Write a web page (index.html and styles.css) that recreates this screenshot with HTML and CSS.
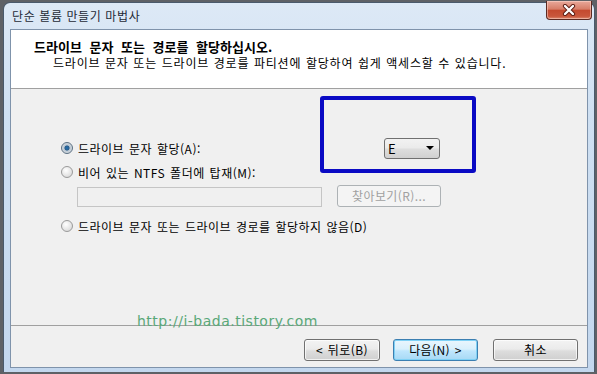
FILE: index.html
```html
<!DOCTYPE html>
<html lang="ko">
<head>
    <meta charset="UTF-8">
    <meta name="viewport" content="width=device-width, initial-scale=1.0">
    <title>단순 볼륨 만들기 마법사</title>
    <link rel="stylesheet" href="styles.css">
</head>
<body>

    <div class="window">
        <!-- Title bar -->
        <div class="titlebar">
            <span class="title">단순 볼륨 만들기 마법사</span>
            <div class="close-btn">
                <svg width="16" height="12" viewBox="0 0 16 12">
                    <path d="M4 2 L12 10 M12 2 L4 10" stroke="#5a1a10" stroke-width="4.2" stroke-linecap="round"/>
                    <path d="M4 2 L12 10 M12 2 L4 10" stroke="#ffffff" stroke-width="2.4" stroke-linecap="round"/>
                </svg>
            </div>
        </div>

        <div class="client">
            <!-- Header -->
            <div class="header">
                <div class="header-title">드라이브 문자 또는 경로를 할당하십시오.</div>
                <div class="header-sub">드라이브 문자 또는 드라이브 경로를 파티션에 할당하여 쉽게 액세스할 수 있습니다.</div>
            </div>

            <!-- Options -->
            <div class="content">
                <div class="option-row">
                    <label class="option option-first">
                        <span class="radio checked"></span>
                        <span>드라이브 문자 할당(A):</span>
                    </label>
                    <div class="combo">
                        <span>E</span>
                        <span class="combo-arrow"></span>
                    </div>
                </div>
                <div class="option-row">
                    <label class="option">
                        <span class="radio"></span>
                        <span>비어 있는 NTFS 폴더에 탑재(M):</span>
                    </label>
                </div>
                <div class="path-row">
                    <div class="path-field"></div>
                    <div class="btn btn-disabled btn-browse">찾아보기(R)...</div>
                </div>
                <div class="option-row option-last">
                    <label class="option">
                        <span class="radio"></span>
                        <span>드라이브 문자 또는 드라이브 경로를 할당하지 않음(D)</span>
                    </label>
                </div>
            </div>

            <!-- Buttons -->
            <div class="footer">
                <div class="btn btn-back">&lt; 뒤로(B)</div>
                <div class="btn btn-default btn-next">다음(N) &gt;</div>
                <div class="btn btn-cancel">취소</div>
            </div>
        </div>
    </div>

    <!-- annotations drawn over the screenshot -->
    <div class="highlight-box"></div>
    <div class="watermark">http://i-bada.tistory.com</div>

</body>
</html>
```

FILE: styles.css
```css
body {
    margin: 0;
    padding: 0;
    height: 374px;
    overflow: hidden;
    background: #5e6166;
    font-family: "Noto Sans CJK KR", "Liberation Sans", sans-serif;
    font-size: 12px;
    color: #000;
}
.window {
    box-sizing: border-box;
    margin: 2px 2px 0 3px;
    height: 370px;
    border: 1px solid #4a5a6c;
    border-bottom: none;
    border-radius: 7px 7px 0 0;
    background: linear-gradient(to bottom, #dde9f6 0%, #cfe0f2 30%, #c3d7ee 100%);
    display: flex;
    flex-direction: column;
}
.titlebar {
    height: 26px;
    display: flex;
    justify-content: space-between;
    align-items: flex-start;
    padding: 0 2px 0 8px;
}
.title {
    margin-top: 5px;
    line-height: 15px;
    letter-spacing: 0.6px;
    color: #1e2a36;
}
.close-btn {
    box-sizing: border-box;
    width: 46px;
    height: 19px;
    margin-top: -2px;
    border: 1px solid #5b2a22;
    border-top: none;
    border-radius: 0 0 4px 4px;
    background: linear-gradient(to bottom, #e9a99b 0%, #d77d68 45%, #c44a2f 52%, #c9573c 85%, #dc8a70 100%);
    box-shadow: inset 0 0 0 1px rgba(255, 220, 210, 0.5);
    display: flex;
    align-items: center;
    justify-content: center;
}
.client {
    flex: 1;
    margin: 0 6px 4px 6px;
    border: 1px solid #7f93ab;
    background: #f0f0f0;
    display: flex;
    flex-direction: column;
}
.header {
    height: 49px;
    background: #fff;
    border-bottom: 1px solid #a0a0a0;
    padding: 9px 0 0 23px;
}
.header-title {
    font-weight: bold;
    font-size: 13px;
    line-height: 15px;
    word-spacing: 4px;
}
.header-sub {
    margin: 1px 0 0 19px;
    line-height: 15px;
    letter-spacing: 0.8px;
    word-spacing: 0.5px;
}
.content {
    flex: 1;
    padding: 48px 0 0 50px;
}
.option-row {
    display: flex;
    align-items: center;
    height: 22px;
    margin-bottom: 2px;
}
.option-last {
    margin-top: 8px;
}
.option {
    display: flex;
    align-items: center;
    gap: 5px;
    letter-spacing: 0.5px;
    word-spacing: 1px;
}
.option-first {
    width: 323px;
}
.radio {
    box-sizing: border-box;
    width: 12px;
    height: 12px;
    border-radius: 50%;
    border: 1px solid #9a9a9a;
    background: radial-gradient(circle at 40% 35%, #ffffff 0%, #e6e6e6 55%, #cfcfcf 100%);
}
.radio.checked {
    border-color: #5b6f82;
    background: radial-gradient(circle, #1f6fb3 0%, #2c5f8c 30%, #b9c6d2 42%, #eeeeee 100%);
}
.combo {
    box-sizing: border-box;
    width: 56px;
    height: 21px;
    border: 1px solid #707070;
    border-radius: 3px;
    background: linear-gradient(to bottom, #f2f2f2 0%, #ebebeb 45%, #dddddd 55%, #d0d0d0 100%);
    display: flex;
    align-items: center;
    justify-content: space-between;
    padding: 0 5px 0 3px;
    font-size: 13px;
}
.combo-arrow {
    width: 0;
    height: 0;
    border-left: 4px solid transparent;
    border-right: 4px solid transparent;
    border-top: 4px solid #000;
}
.path-row {
    display: flex;
    align-items: flex-end;
    padding-left: 16px;
    gap: 15px;
}
.path-field {
    box-sizing: border-box;
    width: 245px;
    height: 20px;
    border: 1px solid #c5c5c5;
    background: #f0f0f0;
}
.btn {
    box-sizing: border-box;
    height: 22px;
    border: 1px solid #707070;
    border-radius: 3px;
    background: linear-gradient(to bottom, #f3f3f3 0%, #ebebeb 45%, #dddddd 55%, #cfcfcf 100%);
    box-shadow: inset 0 0 0 1px rgba(255, 255, 255, 0.7);
    display: flex;
    align-items: center;
    justify-content: center;
    line-height: 14px;
    letter-spacing: 0.4px;
    word-spacing: 1px;
}
.btn-disabled {
    border-color: #adb2b5;
    background: #f4f4f4;
    box-shadow: none;
    color: #a0a0a0;
}
.btn-browse {
    width: 104px;
}
.footer {
    height: 28px;
    border-top: 1px solid #a0a0a0;
    display: flex;
    justify-content: flex-end;
    align-items: flex-start;
    padding: 13px 9px 0 0;
}
.btn-back {
    width: 76px;
}
.btn-next {
    width: 85px;
    margin-left: 13px;
}
.btn-cancel {
    width: 85px;
    margin-left: 15px;
}
.btn-default {
    border-color: #3c7fb1;
    background: linear-gradient(to bottom, #eaf6fd 0%, #d9f0fc 45%, #bee6fd 55%, #a7d9f5 100%);
    box-shadow: inset 0 0 0 1px #7fd1f5;
}
.highlight-box {
    position: absolute;
    left: 320px;
    top: 96px;
    width: 156px;
    height: 77px;
    box-sizing: border-box;
    border: 4px solid #0a0ac4;
    border-radius: 3px;
}
.watermark {
    position: absolute;
    left: 137px;
    top: 313px;
    font-family: "DejaVu Sans", Verdana, sans-serif;
    font-size: 14px;
    letter-spacing: 0.5px;
    color: #5aa878;
}
```
